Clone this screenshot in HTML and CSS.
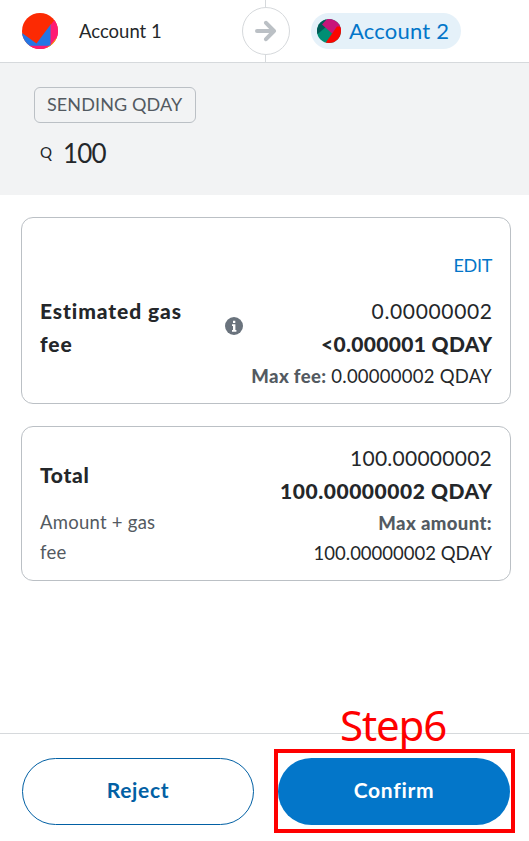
FILE: index.html
```html
<!DOCTYPE html>
<html lang="en">
<head>
<meta charset="utf-8">
<title>Confirm transaction</title>
<link rel="stylesheet" href="styles.css">
</head>
<body>
<main class="page">
  <header class="parties">
    <div class="sender">
      <svg class="avatar" width="36" height="36" viewBox="0 0 36 36"><defs><clipPath id="a"><circle cx="18" cy="18" r="18"/></clipPath></defs><g clip-path="url(#a)"><path fill="#fc2a03" d="M0 0h36v36H0z"/><path fill="#2476e4" d="M0 20 14.500 30.500 29 11v22H0z"/><path fill="#ff1a73" d="M28.500 12 34 5h2v19l-7.500 8zM0 32.700h28L23 36H0z"/><path fill="#f8a210" d="M36 23v13H22.500l6-4z"/></g></svg>
      <span class="sender-name">Account 1</span>
    </div>
    <div class="arrow"><svg width="22" height="22" viewBox="0 0 22 22"><path d="M2 11h17M11 2.800 19 11l-8 8.200" fill="none" stroke="#bbc0c5" stroke-width="4" stroke-linecap="round" stroke-linejoin="round"/></svg></div>
    <div class="recipient">
      <svg width="24" height="24" viewBox="0 0 24 24"><defs><clipPath id="b"><circle cx="12" cy="12" r="12"/></clipPath></defs><g clip-path="url(#b)"><path fill="#018e74" d="M0 0h24v24H0z"/><path fill="#005a56" d="M0 0h9v8L0 15.500z"/><path fill="#c8147a" d="M5 5.500 10 0h14v10l-9 4.500z"/><path fill="#fb0500" d="M8.500 24 20 7.500h4V24z"/></g></svg>
      <span class="recipient-name">Account 2</span>
    </div>
  </header>
  <section class="summary">
    <div class="tag"><span>SENDING QDAY</span></div>
    <div class="amount"><span class="coin">Q</span><span class="sum">100</span></div>
  </section>
  <section class="details">
    <div class="card fee">
      <a class="edit">EDIT</a>
      <div class="row">
        <div class="label strong gas">Estimated gas<br>fee</div>
        <svg class="info" width="18" height="18" viewBox="0 0 18 18"><circle cx="9" cy="9" r="9" fill="#6a737d"/><path fill="#fff" d="M8 3.800h2.300v2.200H8zM7 7.300h3.400v5.700h1v1.700H7V13h1V9H7z"/></svg>
        <div class="values">
          <div class="line"><span class="num">0.00000002</span></div>
          <div class="line strong"><span class="feebold">&lt;0.000001 QDAY</span></div>
          <div class="small first"><b class="maxfee">Max fee:</b> <span class="feemax">0.00000002 QDAY</span></div>
        </div>
      </div>
    </div>
    <div class="card total">
      <div class="label">
        <div class="total-title strong">Total</div>
        <div class="note">Amount + gas<br>fee</div>
      </div>
      <div class="values">
        <div class="line"><span class="totalnum">100.00000002</span></div>
        <div class="line strong"><span class="totalbold">100.00000002 QDAY</span></div>
        <div class="small first"><b class="maxamount">Max amount:</b></div>
        <div class="small"><span class="totalmax">100.00000002 QDAY</span></div>
      </div>
    </div>
  </section>
  <footer class="actions">
    <button class="button reject">Reject</button>
    <div class="confirm-wrap">
      <button class="button confirm">Confirm</button>
      <div class="highlight"></div>
      <div class="step">Step6</div>
    </div>
  </footer>
</main>
</body>
</html>
```
FILE: styles.css
```css
* { box-sizing: border-box; }
body { margin: 0; background: #fff; color: #24272a; font-family: Lato, "Liberation Sans", sans-serif; }
.page { height: 841px; display: flex; flex-direction: column; overflow: hidden; }
.parties {
  height: 63px; flex: none; display: grid; grid-template-columns: 242px 48px 1fr; align-items: center;
  border-bottom: 1px solid #d6d9dc;
  background: linear-gradient(#d6d9dc, #d6d9dc) 265px 0 / 1px 62px no-repeat;
}
.sender { display: flex; align-items: center; padding-left: 22px; gap: 21px; }
.sender-name { font-size: 18.500px; padding-bottom: 1px; }
.arrow { width: 48px; height: 48px; display: flex; align-items: center; justify-content: center; border: 1px solid #d6d9dc; border-radius: 50%; background: #fff; }
.recipient { justify-self: start; margin-left: 21px; width: 150px; height: 36px; display: flex; align-items: center; padding-left: 6px; gap: 8px; border-radius: 18px; background: #e5f1f9; color: #0376c9; }
.recipient-name { font-size: 22px; white-space: nowrap; letter-spacing: .2px; padding-bottom: 2px; }
.summary { height: 132px; flex: none; padding: 24px 34px 0; background: #f2f3f4; }
.tag { width: 162px; height: 36px; padding-left: 12px; border: 1px solid #bbc0c5; border-radius: 6px; line-height: 32px; font-size: 18px; letter-spacing: .1px; color: #535a61; white-space: nowrap; }
.amount { display: flex; align-items: center; padding-left: 6px; margin-top: 11px; height: 36px; gap: 11px; }
.coin { font-size: 15px; }
.sum { font-size: 26px; letter-spacing: -.9px; padding-top: 1px; }
.details { flex: 1; padding: 22px 18px 0 21px; display: flex; flex-direction: column; gap: 22px; }
.card { border: 1px solid #bbc0c5; border-radius: 12px; padding: 0 18px; }
.fee { height: 187px; padding-top: 31px; }
.edit { display: block; text-align: right; font-size: 18px; line-height: 32px; letter-spacing: -.3px; color: #0376c9; }
.row { display: flex; margin-top: 13px; }
.gas { width: 185px; letter-spacing: .9px; }
.strong { font-weight: 900; }
.label { font-size: 21px; line-height: 33px; }
.info { flex: none; margin-top: 23px; }
.values { flex: 1; text-align: right; white-space: nowrap; margin-left: -20px; }
.line { font-size: 21px; line-height: 33px; }
.small { font-size: 18.500px; line-height: 30px; }
.first { margin-top: 1px; }
.small b { color: #535a61; font-weight: 900; letter-spacing: .38px; }
.num { letter-spacing: .65px; margin-right: -.65px; }
.totalnum { letter-spacing: .25px; }
.feebold { letter-spacing: .32px; margin-right: -.32px; }
.totalbold { letter-spacing: .53px; margin-right: -.53px; }
.feemax { letter-spacing: .25px; }
.total { height: 155px; padding-top: 14px; display: flex; }
.total-title { padding-top: 17px; letter-spacing: .7px; }
.note { font-size: 18.500px; line-height: 30px; margin-top: 16px; letter-spacing: .25px; color: #535a61; }
.actions { height: 108px; flex: none; border-top: 1px solid #d6d9dc; padding: 24px 19px 0 22px; display: flex; gap: 24px; }
.button { width: 232px; height: 67px; padding: 0 0 4px; border-radius: 34px; font: 700 21px Lato, sans-serif; letter-spacing: .7px; }
.reject { border: 1px solid #0260a4; background: #fff; color: #0260a4; }
.confirm { border: 0; background: #0376c9; color: #fff; }
.confirm-wrap { position: relative; }
.highlight { position: absolute; left: -4px; top: -9px; width: 241px; height: 84px; border: 4px solid #fe0000; }
.step { position: absolute; left: 62px; top: -62px; font: 42px/57px "Noto Sans", sans-serif; letter-spacing: -1.100px; color: #fe0000; }
```
